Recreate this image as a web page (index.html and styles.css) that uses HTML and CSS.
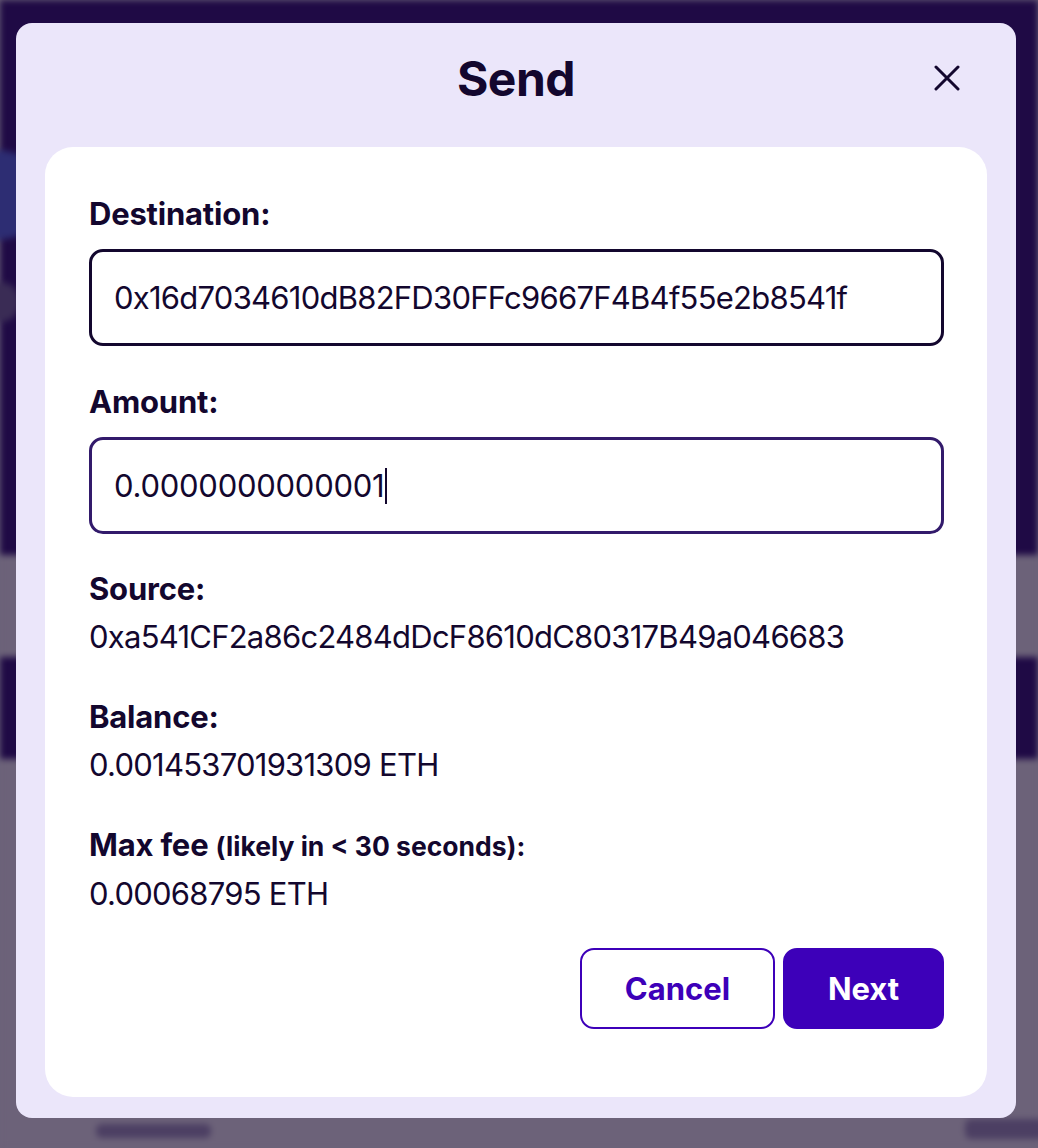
FILE: index.html
```html
<!DOCTYPE html>
<html lang="en">
<head>
  <meta charset="UTF-8" />
  <meta name="viewport" content="width=device-width, initial-scale=1.0"/>
  <title>Send</title>
  <link rel="stylesheet" href="styles.css">
</head>
<body>

  <!-- Page behind the dialog (dimmed) -->
  <div class="behind">
    <div class="behind-top">
      <span class="blob blob-blue"></span>
      <span class="blob blob-dark"></span>
    </div>
    <div class="behind-band light"></div>
    <div class="behind-band dark"></div>
    <div class="behind-rest light">
      <span class="ghost ghost-left"></span>
      <span class="ghost ghost-right"></span>
    </div>
  </div>

  <!-- Send dialog -->
  <div class="modal" role="dialog" aria-labelledby="modalTitle">
    <header class="modal-header">
      <h2 id="modalTitle">Send</h2>
      <button class="close" aria-label="Close">
        <svg width="26" height="26" viewBox="0 0 26 26" fill="none" stroke="currentColor" stroke-width="3" stroke-linecap="round">
          <path d="M2 2 L24 24 M24 2 L2 24"/>
        </svg>
      </button>
    </header>

    <div class="modal-body">
      <div class="field-label">Destination:</div>
      <div class="field-input">0x16d7034610dB82FD30FFc9667F4B4f55e2b8541f</div>

      <div class="field-label spaced">Amount:</div>
      <div class="field-input focused">0.0000000000001<span class="caret"></span></div>

      <div class="detail first">
        <div class="detail-label">Source:</div>
        <div class="detail-value">0xa541CF2a86c2484dDcF8610dC80317B49a046683</div>
      </div>
      <div class="detail">
        <div class="detail-label">Balance:</div>
        <div class="detail-value">0.001453701931309 ETH</div>
      </div>
      <div class="detail">
        <div class="detail-label">Max fee <small>(likely in &lt; 30 seconds):</small></div>
        <div class="detail-value">0.00068795 ETH</div>
      </div>

      <div class="actions">
        <button class="btn btn-outline">Cancel</button>
        <button class="btn btn-primary">Next</button>
      </div>
    </div>
  </div>

</body>
</html>
```

FILE: styles.css
```css
* {
  margin: 0;
  padding: 0;
  box-sizing: border-box;
}
body {
  font-family: 'Inter', 'Liberation Sans', sans-serif;
  color: #13072e;
  background: #6c6279;
  min-height: 100vh;
  overflow: hidden;
}

/* Page derrière la modale */
.behind {
  display: flex;
  flex-direction: column;
  height: 1148px;
  filter: blur(3px);
}
.behind-top {
  height: 555px;
  background: #1f0a45;
  position: relative;
}
.behind-band {
  height: 102px;
}
.behind-band.dark,
.behind-top {
  background: #1f0a45;
}
.light {
  background: #6c6279;
}
.behind-rest {
  flex: 1;
  position: relative;
}
.blob {
  position: absolute;
  border-radius: 50%;
}
.blob-blue {
  left: -60px;
  top: 150px;
  width: 110px;
  height: 90px;
  background: #2d2d73;
}
.blob-dark {
  left: -20px;
  top: 282px;
  width: 40px;
  height: 40px;
  background: #3a2c55;
}
.ghost {
  position: absolute;
  background: #4c3f63;
  border-radius: 6px;
}
.ghost-left {
  left: 96px;
  top: 365px;
  width: 115px;
  height: 14px;
}
.ghost-right {
  left: 965px;
  top: 360px;
  width: 80px;
  height: 20px;
}

/* Modale */
.modal {
  position: fixed;
  top: 23px;
  left: 16px;
  width: 1000px;
  height: 1095px;
  background: #ebe6fa;
  border-radius: 16px;
  padding: 0 29px 21px;
  display: flex;
  flex-direction: column;
}
.modal-header {
  height: 124px;
  padding-bottom: 14px;
  display: grid;
  grid-template-columns: 1fr auto 1fr;
  align-items: center;
}
.modal-header h2 {
  grid-column: 2;
  font-size: 48px;
  font-weight: 700;
  letter-spacing: -0.5px;
  color: #13072e;
}
.close {
  grid-column: 3;
  justify-self: end;
  margin-right: 27px;
  width: 26px;
  height: 26px;
  border: none;
  background: none;
  color: #13072e;
  cursor: pointer;
  display: flex;
}

.modal-body {
  flex: 1;
  background: #fff;
  border-radius: 28px;
  padding: 43px 43px 0 44px;
  display: flex;
  flex-direction: column;
}

.field-label,
.detail-label {
  font-size: 31px;
  line-height: 48px;
  font-weight: 700;
  letter-spacing: -0.2px;
}
.field-label {
  margin-bottom: 11px;
}
.field-label.spaced {
  margin-top: 32px;
}
.field-input {
  height: 97px;
  border: 3px solid #13072e;
  border-radius: 14px;
  padding: 0 22px;
  display: flex;
  align-items: center;
  font-size: 31px;
  letter-spacing: -0.75px;
  white-space: nowrap;
}
.field-input.focused {
  border-color: #321a6b;
  letter-spacing: -0.25px;
}
.caret {
  display: inline-block;
  width: 2px;
  height: 36px;
  margin-left: 1px;
  background: #13072e;
}

.detail {
  margin-top: 32px;
}
.detail.first {
  margin-top: 31px;
}
.detail-label small {
  font-size: 26.5px;
  letter-spacing: 0;
}
.detail-value {
  font-size: 31px;
  line-height: 48px;
  letter-spacing: -0.75px;
}

.actions {
  margin-top: 30px;
  display: flex;
  justify-content: flex-end;
  gap: 8px;
}
.btn {
  height: 81px;
  border-radius: 14px;
  font-family: inherit;
  font-size: 31px;
  font-weight: 700;
  cursor: pointer;
}
.btn-outline {
  width: 195px;
  background: #fff;
  border: 2px solid #3d00b9;
  color: #3d00b9;
}
.btn-primary {
  width: 161px;
  background: #3d00b9;
  border: 2px solid #3d00b9;
  color: #fff;
}
```
